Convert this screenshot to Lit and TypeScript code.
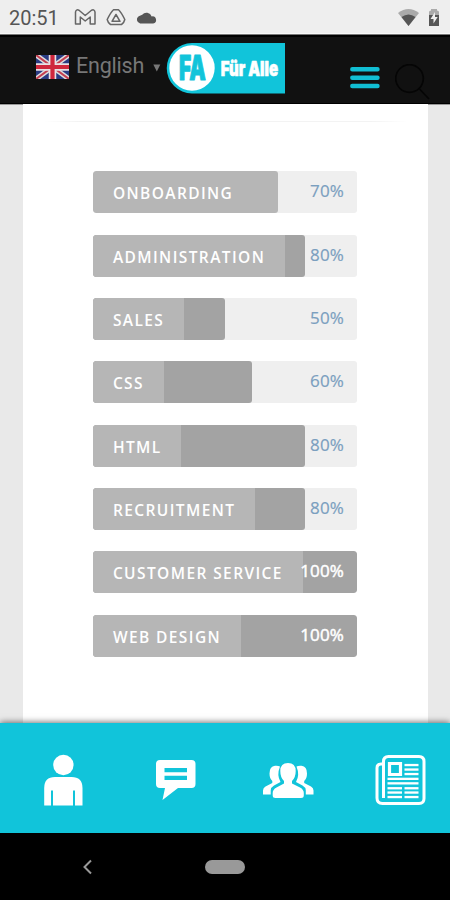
import { LitElement, html, css, svg } from "lit";
import { customElement, property } from "lit/decorators.js";

interface Skill {
  name: string;
  value: number;
  label: number;
}

const SKILLS: Skill[] = [
  { name: "ONBOARDING", value: 70, label: 184.8 },
  { name: "ADMINISTRATION", value: 80, label: 191.5 },
  { name: "SALES", value: 50, label: 91 },
  { name: "CSS", value: 60, label: 70.5 },
  { name: "HTML", value: 80, label: 88 },
  { name: "RECRUITMENT", value: 80, label: 162 },
  { name: "CUSTOMER SERVICE", value: 100, label: 209.5 },
  { name: "WEB DESIGN", value: 100, label: 147.5 },
];

@customElement("skill-bar")
export class SkillBar extends LitElement {
  @property() name = "";
  @property({ type: Number }) value = 0;
  @property({ type: Number }) label = 0;

  static styles = css`
    :host { display: block; height: 42px; }
    .track {
      display: grid; height: 42px; width: 264px; border-radius: 3px;
      background: #efefef; overflow: hidden; color: #7b9fbf;
    }
    .track > * { grid-area: 1 / 1; }
    .fill { background: #a3a3a3; border-radius: 3px; overflow: hidden; display: flex; }
    .name {
      flex: none; box-sizing: border-box; padding-left: 19.5px; background: #b6b6b6;
      color: #fff; font-weight: 600; font-size: 15.5px; letter-spacing: 1.4px;
      line-height: 45px; white-space: nowrap;
    }
    .value {
      justify-self: end; padding-right: 13.5px; font-size: 17px; line-height: 40px;
      letter-spacing: 0.1px; -webkit-text-stroke: 0.2px currentColor;
    }
    .full { color: #fff; -webkit-text-stroke: 0.5px #fff; }
  `;

  render() {
    return html`<div class="track">
      <div class="fill" style="width:${this.value}%">
        <div class="name" style="width:${this.label}px">${this.name}</div>
      </div>
      <div class="value ${this.value === 100 ? "full" : ""}">${this.value}%</div>
    </div>`;
  }
}

const newsLines = [
  [29, 10, 14], [29, 14.5, 14], [29, 19, 14],
  [12, 23.8, 31], [12, 28.3, 31],
  [12, 33.2, 14.5], [29, 33.2, 14],
  [12, 37.5, 14.5], [29, 37.5, 14],
  [12, 42, 14.5], [29, 42, 14],
];

@customElement("app-root")
export class AppRoot extends LitElement {
  static styles = css`
    :host {
      display: flex; flex-direction: column; width: 450px; height: 900px; overflow: hidden;
      font-family: "Open Sans", sans-serif; background: #e9e9e9;
    }
    svg { display: block; flex: none; }
    .status {
      flex: none; height: 34px; background: #eee; display: flex; align-items: center;
      box-sizing: border-box; padding: 2px 8px 0 9px; color: #555;
      font: 20px Roboto, sans-serif; border-bottom: 1px solid #f8f8f8;
    }
    .clock { width: 65px; }
    .notifs { margin-right: auto; }
    .header {
      flex: none; height: 69px; margin-top: 1px; box-sizing: border-box; background: #111;
      border-top: 2px solid #000; border-bottom: 1px solid #000;
      display: flex; align-items: flex-start; padding-left: 36px;
      box-shadow: 0 -1px 0 #777, 0 1px 0 #999;
    }
    .flag { margin-top: 18px; }
    .lang { margin: 15px 0 0 7px; font: 21.5px/28px Roboto, sans-serif; letter-spacing: -0.2px; color: #777; width: 76px; }
    .caret { margin: 27px 0 0 1px; }
    .logo { margin: 5px 0 0 6px; overflow: visible; }
    .menu { margin: 29px 0 0 64px; }
    .search { margin: 27px 0 0 14px; }
    .main { flex: 1; min-height: 0; width: 405px; margin-left: 23px; background: #fff; }
    .rule { height: 1px; margin: 17px 20px 49.3px; background: linear-gradient(90deg, #fff, #f3f3f3 10%, #f3f3f3 90%, #fff); }
    .skills { display: flex; flex-direction: column; gap: 21.35px; padding-left: 70.4px; }
    .tabs {
      flex: none; height: 110px; background: #11c4da; display: flex; position: relative;
      box-shadow: 0 -1px 6px #0008;
    }
    .nav { flex: none; height: 67px; background: #000; display: flex; align-items: center; }
    .back { margin-left: 82px; }
    .home { width: 40px; height: 14px; border-radius: 7px; background: #999; margin-left: 112px; }
  `;

  render() {
    return html`
      <div class="status">
        <span class="clock">20:51</span>
        <svg class="notifs" width="86" height="20" viewBox="0 0 86 20" fill="none" stroke="#666" stroke-width="1.5" stroke-linejoin="round">
          <path d="M1.500 4Q2 1 5 2.200L11.200 7.500L17.500 2.200Q20.500 1 21 4V16H16.200V9L11.200 13L6.300 9V16H1.500Z"/>
          <path d="M39.500 1.800H44.500Q47 4 50.800 11.500Q50 15 47.500 16.500H36.500Q34 15 33.200 11.500Q37 4 39.500 1.800ZM42 6.500L46 13.300H38Z"/>
          <path fill="#555" stroke="none" d="M67 15.500A4 4 0 0 1 65.500 8.200L69 6.800A5.500 5.500 0 0 1 78.500 8.400A3.600 3.600 0 0 1 80 15.500Z" transform="translate(-.8 0)"/>
        </svg>
        <svg width="44" height="20" viewBox="0 0 44 20">
          <path fill="#aaa" d="M0 5 Q10.500 -3 21 5 L10.500 18Z"/>
          <path fill="#555" d="M3.500 9 Q10.500 4 17.500 9 L10.500 18Z"/>
          <path fill="#aaa" d="M31 4 Q31 2.500 33 2.500 V1 H39 V2.500 Q41 2.500 41 4 V8 H31Z"/>
          <path fill="#555" d="M31 7 H41 V18 H31Z"/>
          <path fill="#eee" d="M37 4 L32.500 11 H35.500 V15.500 L39.700 9 H37Z"/>
        </svg>
      </div>
      <div class="header">
        <svg class="flag" width="33" height="24" viewBox="0 0 33 24">
          <path fill="#293b83" d="M0 0H33V24H0Z"/>
          <path stroke="#ddd" stroke-width="5" d="M0 0 33 24M33 0 0 24"/>
          <path stroke="#c33e50" stroke-width="2" d="M0 0 33 24M33 0 0 24"/>
          <path stroke="#e8e0e4" stroke-width="7.500" d="M16.500 0V24M0 12H33"/>
          <path stroke="#cf273d" stroke-width="4.200" d="M16.500 0V24M0 12H33"/>
        </svg>
        <span class="lang">English</span>
        <svg class="caret" width="8" height="9" viewBox="0 0 8 9"><path fill="#777" d="M.3 .5H7.300L3.800 7.500Z"/></svg>
        <svg class="logo" width="119" height="52" viewBox="0 0 119 52">
          <path fill="#11c4da" d="M25 1H118V51.500H25A25 25 0 0 1 25 1Z"/>
          <circle cx="25" cy="26" r="22.700" fill="#fff"/>
          <g font-family="Inter, sans-serif" font-weight="900" stroke-linejoin="round">
            <text transform="translate(11.900 38.400) scale(.62 1)" font-size="33.500" fill="#11c4da" stroke="#11c4da" stroke-width="1">FA</text>
            <text transform="translate(53.800 33.500) scale(.73 1)" font-size="20.500" fill="#fff" stroke="#fff" stroke-width=".7">Für Alle</text>
          </g>
        </svg>
        <svg class="menu" width="31" height="24" viewBox="0 0 31 24">
          <path stroke="#11bed3" stroke-width="4.400" stroke-linecap="round" d="M2.300 3.300H27.500M2.300 11.700H27.500M2.300 20H27.500"/>
        </svg>
        <svg class="search" width="36" height="38" viewBox="0 0 36 38" fill="none" stroke="#050505" stroke-width="1.700">
          <circle cx="14.500" cy="14.500" r="13.800"/><path d="M24.500 25 34 35"/>
        </svg>
      </div>
      <div class="main">
        <div class="rule"></div>
        <div class="skills">
          ${SKILLS.map((s) => html`<skill-bar .name=${s.name} .value=${s.value} .label=${s.label}></skill-bar>`)}
        </div>
      </div>
      <div class="tabs">
        <svg width="450" height="110" viewBox="0 723 450 110" fill="#fff">
          <circle cx="63.400" cy="765" r="10.200"/>
          <path d="M44.200 805.500V788Q44.200 777 55 777H71.500Q82.500 777 82.500 788V805.500H75V790.500H73V805.500H53V790.500H51V805.500Z"/>
          <path fill-rule="evenodd" d="M160 760H191.500Q195.500 760 195.500 764V784Q195.500 788 191.500 788H178L162.500 800L165 788H160Q156 788 156 784V764Q156 760 160 760ZM164.500 768V772.300H187V768ZM164.500 775.700V780H187V775.700Z"/>
          <path d="M280 766.500Q278 765.500 275 765.800Q269.500 766.500 269.500 773.500Q269.500 778.500 272.300 781V783L265.500 786.500Q263 788 263 790.500V794.500H270.700V790.500Q271 787 274 785.500L280.500 782Q276.500 775 280 766.500Z"/>
          <path d="M296.500 766.500Q298.500 765.500 301.500 765.800Q307 766.500 307 773.500Q307 778.500 304.200 781V783L311 786.500Q313.500 788 313.500 790.500V794.500H305.800V790.500Q305.500 787 302.500 785.500L296 782Q300 775 296.500 766.500Z"/>
          <path d="M288 763Q295.700 763 295.700 771Q295.700 777.500 292 781V783.500L300 787.500Q303.800 789.500 303.800 793V795.500Q303.800 798 301 798H275.500Q272.700 798 272.700 795.500V793Q272.700 789.500 276.500 787.500L284 783.500V781Q280.300 777.500 280.300 771Q280.300 763 288 763Z" stroke="#11c4da" stroke-width="1.200" paint-order="stroke"/>
          <g transform="translate(375.500 755)">
            <path fill="none" stroke="#fff" stroke-width="3" stroke-linejoin="round" d="M8 9H5.500Q1.500 9 1.500 13V43Q1.500 48.500 7 48.500H43.500Q48.500 48.500 48.500 43.500V6.500Q48.500 1.500 43.500 1.500H13Q8 1.500 8 6.500V43"/>
            <path fill="none" stroke="#fff" stroke-width="3.200" d="M14 8.500H25V19.500H14Z"/>
            ${newsLines.map(([x, y, w]) => svg`<rect x=${x} y=${y - 1.1} width=${w} height="2.300"/>`)}
          </g>
        </svg>
      </div>
      <div class="nav">
        <svg class="back" width="11" height="16" viewBox="0 0 11 16"><path fill="none" stroke="#999" stroke-width="2" d="M9 1.500 2.500 8 9 14.500"/></svg>
        <div class="home"></div>
      </div>
    `;
  }
}
